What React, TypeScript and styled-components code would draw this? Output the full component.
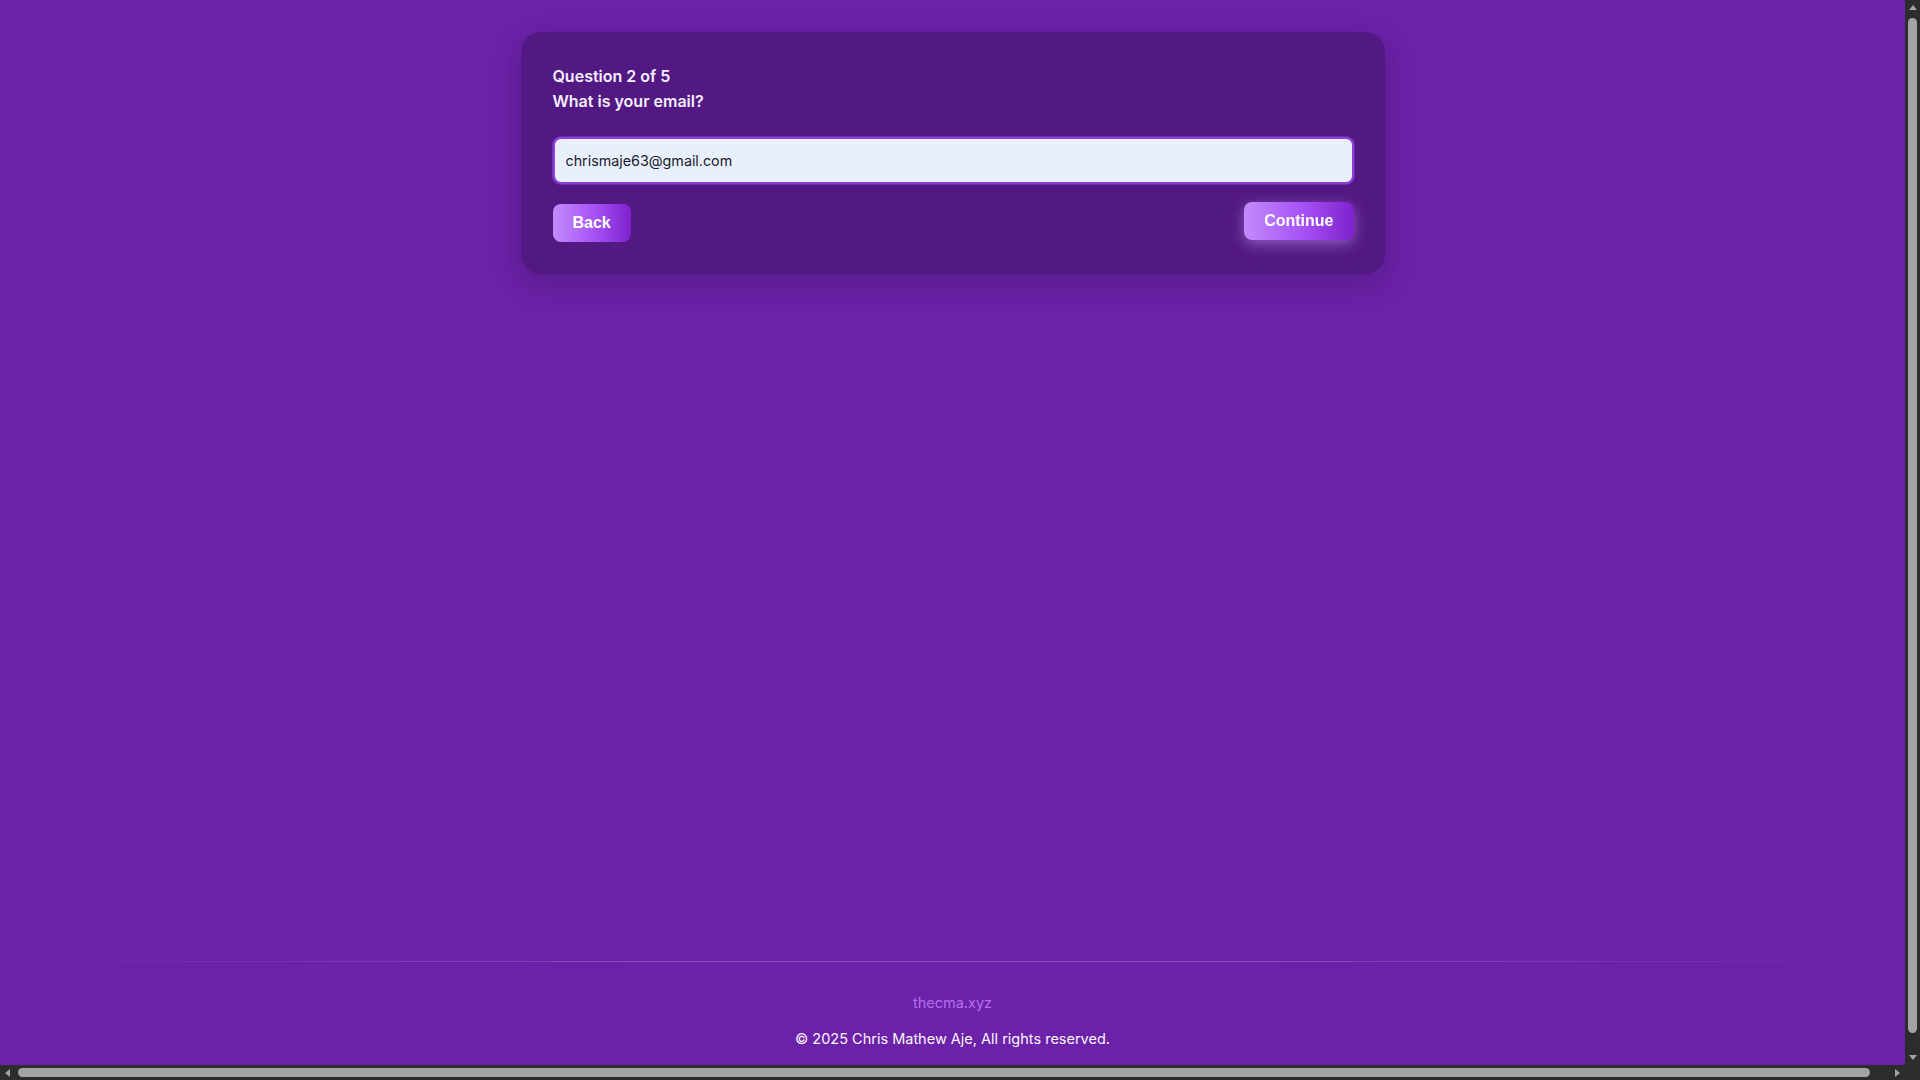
import React, { useEffect, useRef } from "react";
import styled, { createGlobalStyle } from "styled-components";

const GlobalStyle = createGlobalStyle`
  html, body {
    margin: 0;
    background: #6b21a8;
  }
  body {
    color: #ffffff;
    font-family: Inter, "Open Sans", "Liberation Sans", sans-serif;
    overflow: hidden;
  }
  *, *::before, *::after {
    box-sizing: border-box;
  }
`;

/* Browser window frame: page viewport plus the dark classic scrollbars */
const Frame = styled.div`
  display: grid;
  grid-template-columns: 1fr 15px;
  grid-template-rows: 1fr 15px;
  width: 100vw;
  height: 100vh;
`;

const Viewport = styled.div`
  overflow: hidden;
  padding: 8px;
  background: #6b21a8;
`;

const VScroll = styled.div`
  display: flex;
  flex-direction: column;
  background: #2c2c2c;
`;

const HScroll = styled.div`
  display: flex;
  flex-direction: row;
  background: #2c2c2c;
`;

const Corner = styled.div`
  background: #2c2c2c;
`;

const ArrowBox = styled.div`
  flex: 0 0 15px;
  width: 15px;
  height: 15px;
  display: flex;
  align-items: center;
  justify-content: center;
`;

const Arrow = styled.span<{ $dir: "up" | "down" | "left" | "right" }>`
  width: 0;
  height: 0;
  border-style: solid;
  border-color: transparent;
  ${(p) =>
    p.$dir === "up"
      ? "border-width: 0 4px 5px 4px; border-bottom-color: #a3a3a3;"
      : p.$dir === "down"
      ? "border-width: 5px 4px 0 4px; border-top-color: #a3a3a3;"
      : p.$dir === "left"
      ? "border-width: 4px 5px 4px 0; border-right-color: #a3a3a3;"
      : "border-width: 4px 0 4px 5px; border-left-color: #a3a3a3;"}
`;

const VTrack = styled.div`
  flex: 1;
  padding: 3px 3px 17px;
  display: flex;
`;

const HTrack = styled.div`
  flex: 1;
  padding: 3px 20px 3px 3px;
  display: flex;
`;

const Thumb = styled.div`
  flex: 1;
  background: #a3a3a3;
  border-radius: 5px;
`;

const Page = styled.div`
  display: flex;
  flex-direction: column;
  min-height: 1070px;
`;

const Main = styled.main`
  flex: 1;
  display: flex;
  justify-content: center;
  align-items: flex-start;
  padding-top: 24px;
`;

const Card = styled.section`
  width: 864px;
  padding: 32px 31px 32px 32px;
  background: rgba(0, 0, 0, 0.22);
  border-radius: 20px;
  box-shadow: 0 10px 30px rgba(0, 0, 0, 0.18);
`;

const QuestionLine = styled.p`
  margin: 0;
  font-size: 16px;
  font-weight: 600;
  line-height: 25px;
  color: #f5efff;
`;

const Field = styled.div`
  margin-top: 23px;
`;

const EmailInput = styled.input`
  display: block;
  width: 100%;
  height: 47px;
  padding: 0 11px;
  border: 2px solid #8b3fdc;
  border-radius: 8px;
  background: #e8f0fe;
  color: #1c1b2b;
  font-family: Inter, "Open Sans", sans-serif;
  font-size: 14.3px;
  outline: none;
  box-shadow: 0 0 0 1px rgba(168, 85, 247, 0.35);
  caret-color: #000000;
`;

const Actions = styled.div`
  display: flex;
  justify-content: space-between;
  align-items: center;
  margin-top: 20px;
`;

const Button = styled.button<{ $glow?: boolean }>`
  padding: 10px 20px;
  border: none;
  border-radius: 8px;
  background: linear-gradient(90deg, #c38bfb 0%, #a855f7 50%, #7e22ce 100%);
  color: #ffffff;
  font-family: "Liberation Sans", Arial, sans-serif;
  font-size: 16px;
  font-weight: 700;
  line-height: 18px;
  cursor: pointer;
  transform: ${(p) => (p.$glow ? "translateY(-2px)" : "none")};
  box-shadow: ${(p) =>
    p.$glow ? "0 4px 14px rgba(216, 170, 255, 0.45)" : "none"};
`;

const Footer = styled.footer`
  display: flex;
  flex-direction: column;
  align-items: center;
  padding-bottom: 27px;
`;

const Divider = styled.div`
  align-self: stretch;
  height: 1px;
  margin-bottom: 29px;
  background: linear-gradient(
    90deg,
    rgba(255, 255, 255, 0) 0%,
    rgba(255, 255, 255, 0.2) 35%,
    rgba(255, 255, 255, 0.2) 65%,
    rgba(255, 255, 255, 0) 100%
  );
`;

const SiteLink = styled.a`
  font-size: 14.5px;
  line-height: 24px;
  color: #b36ff0;
  text-decoration: none;
`;

const Copyright = styled.p`
  margin: 12px 0 0;
  font-size: 14.5px;
  line-height: 24px;
  color: #fbf7ff;
`;

export default function App() {
  const inputRef = useRef<HTMLInputElement>(null);

  useEffect(() => {
    const el = inputRef.current;
    if (el) {
      el.focus();
      try {
        const len = el.value.length;
        el.setSelectionRange(len, len);
      } catch {
        /* selection unsupported */
      }
    }
  }, []);

  return (
    <>
      <GlobalStyle />
      <Frame>
        <Viewport>
          <Page>
            <Main>
              <Card>
                <QuestionLine>Question 2 of 5</QuestionLine>
                <QuestionLine>What is your email?</QuestionLine>
                <Field>
                  <EmailInput
                    ref={inputRef}
                    type="text"
                    inputMode="email"
                    autoComplete="email"
                    defaultValue="chrismaje63@gmail.com"
                  />
                </Field>
                <Actions>
                  <Button type="button">Back</Button>
                  <Button type="button" $glow>
                    Continue
                  </Button>
                </Actions>
              </Card>
            </Main>
            <Footer>
              <Divider />
              <SiteLink href="#">thecma.xyz</SiteLink>
              <Copyright>© 2025 Chris Mathew Aje, All rights reserved.</Copyright>
            </Footer>
          </Page>
        </Viewport>
        <VScroll>
          <ArrowBox>
            <Arrow $dir="up" />
          </ArrowBox>
          <VTrack>
            <Thumb />
          </VTrack>
          <ArrowBox>
            <Arrow $dir="down" />
          </ArrowBox>
        </VScroll>
        <HScroll>
          <ArrowBox>
            <Arrow $dir="left" />
          </ArrowBox>
          <HTrack>
            <Thumb />
          </HTrack>
          <ArrowBox>
            <Arrow $dir="right" />
          </ArrowBox>
        </HScroll>
        <Corner />
      </Frame>
    </>
  );
}
